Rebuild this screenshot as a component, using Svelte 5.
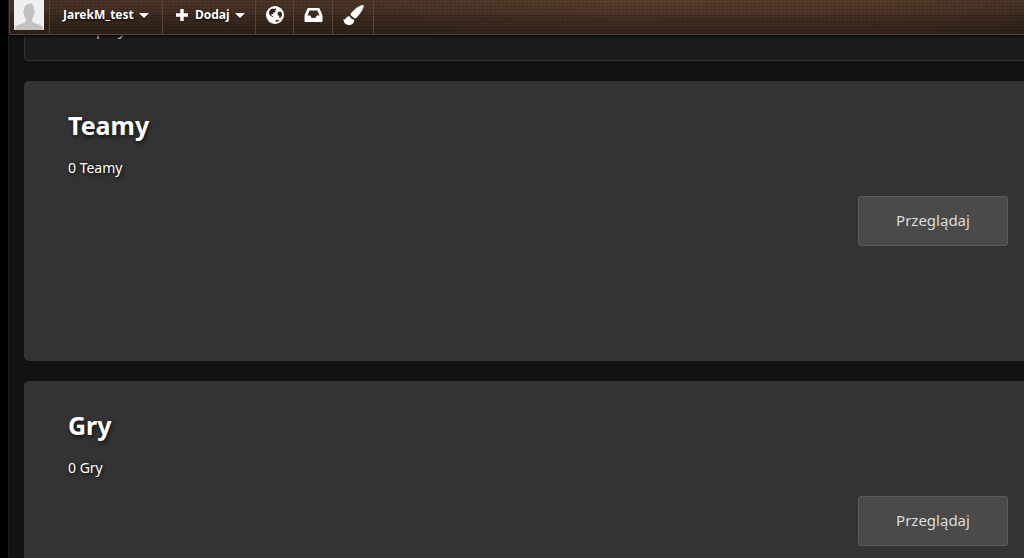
<script lang="ts">
  let userName = 'JarekM_test';

  let sections = [
    { title: 'Teamy', count: 0 },
    { title: 'Gry', count: 0 }
  ];
</script>

<div class="page">
  <header class="toolbar">
    <nav class="tools" aria-label="Pasek narzędzi">
      <a class="avatar" href="#profil" aria-label="Profil">
        <svg viewBox="0 0 30 30" aria-hidden="true">
          <rect width="30" height="30" fill="#efefef" />
          <path
            fill="#c2c2c2"
            d="M1 30c0-4 2-5 6-6 4-1 5-2 5-5-1-1-2-3-2-5-1-1-1-2 0-4 0-4 2-6 5-6 1 0 1-1 2-1 2 1 3 3 3 7 1 2 1 3 0 4 0 2-1 4-2 5 0 3 1 4 5 5 4 1 6 2 6 6z"
          />
        </svg>
      </a>
      <button type="button" class="tool user">
        <span>{userName}</span>
        <span class="caret"></span>
      </button>
      <button type="button" class="tool add">
        <svg class="plus" viewBox="0 0 12 12" aria-hidden="true">
          <path fill="#fff" d="M4.3 0h3.4v4.3H12v3.4H7.7V12H4.3V7.7H0V4.3h4.3z" />
        </svg>
        <span>Dodaj</span>
        <span class="caret"></span>
      </button>
      <button type="button" class="tool icon" aria-label="Język">
        <svg viewBox="0 0 18 18" aria-hidden="true">
          <circle cx="9" cy="9" r="9" fill="#fff" />
          <path
            fill="#35251b"
            d="M3.5 4.5L6 2.5l2 .5 1.500-.8 1 1.300-1.500 1 .8 1.200-1.800.8L6.700 8l-1.500.2.3 1.300 1.700.8-.5.6-2.400-1.200L3 7.500z"
          />
          <path fill="#35251b" d="M11.5 7.500l1-1.700 2-.3 1.300 1.500.2 2.500-1.700 2.500-1-.3-.2-1.900-1.400-.6z" />
          <path fill="#35251b" d="M9.5 14.500l2-.8 2 .3-1.300 1.300-2.500.7z" />
        </svg>
      </button>
      <button type="button" class="tool icon" aria-label="Wiadomości">
        <svg class="inbox" viewBox="0 0 18 18" aria-hidden="true">
          <path
            fill="#fff"
            fill-rule="evenodd"
            d="M4.2 2h9.600c.8 0 1.200.3 1.500 1L18 9.500V15c0 .7-.4 1-1 1H1c-.6 0-1-.3-1-1V9.500L2.700 3c.3-.7.7-1 1.500-1zm.8 2.600L3 9.500h2.800l1.300 2.600h3.800l1.300-2.600H15l-2-4.900z"
          />
        </svg>
      </button>
      <button type="button" class="tool icon" aria-label="Wygląd">
        <svg class="brush" viewBox="0 0 20 20" aria-hidden="true">
          <path
            fill="#fff"
            d="M19 0c1.500.2 1.500 1.600.8 3-1.500 3-4.200 7.500-7 9.800-1 .8-1.600.8-2.500 0L7.500 10.500c-.7-.8-.7-1.400 0-2.300C10 5 14.500 1.500 17.300.4 18 .1 18.500 0 19 0z"
          />
          <path
            fill="#fff"
            d="M6.200 11.200c.8 2 2 3 4.500 3.500.2 3.600-2.400 5.300-5.200 5.300C2 20 0 17.700 0 13.800c1 .8 1.700.9 2.200-.2.8-1.800 2.200-2.700 4-2.400z"
          />
        </svg>
      </button>
    </nav>
  </header>

  <main class="content">
    <section class="group">
      <p>0 Wpisy</p>
    </section>
    {#each sections as section (section.title)}
      <section class="card">
        <h2>{section.title}</h2>
        <p>{section.count} {section.title}</p>
        <button type="button" class="browse">Przeglądaj</button>
      </section>
    {/each}
  </main>
</div>

<style>
  :global(body) {
    background: #000;
  }

  .page {
    box-sizing: border-box;
    height: 100vh;
    margin-left: 8px;
    overflow: hidden;
    border-left: 1px solid #1c1c1c;
    background: #121212;
    color: #fff;
    font-family: 'Noto Sans', sans-serif;
  }

  .toolbar {
    position: relative;
    z-index: 1;
    box-sizing: border-box;
    height: 35px;
    border-bottom: 1px solid #5b473b;
    border-left: 1px solid #5b473b;
    border-bottom-left-radius: 3px;
    background:
      repeating-linear-gradient(0deg, rgba(0, 0, 0, 0.14) 0 1px, transparent 1px 3px),
      repeating-linear-gradient(90deg, rgba(0, 0, 0, 0.06) 0 2px, transparent 2px 4px),
      linear-gradient(rgba(0, 0, 0, 0) 0, rgba(0, 0, 0, 0.14) 14px, rgba(0, 0, 0, 0.22) 15px, rgba(0, 0, 0, 0.4) 34px),
      linear-gradient(90deg, #4c3628, #4f382a 35%, #5c402f 60%, #5a3e2d 85%, #4c3729);
    box-shadow: 0 1px 3px #000;
  }

  .tools {
    display: flex;
    height: 34px;
  }

  .avatar {
    box-sizing: border-box;
    width: 40px;
    padding-left: 4px;
    border-right: 1px solid #57443a;
  }

  .avatar svg {
    display: block;
    width: 30px;
    height: 30px;
  }

  .tool {
    display: flex;
    align-items: center;
    box-sizing: border-box;
    padding: 0 0 4px;
    border: 0;
    border-right: 1px solid #57443a;
    background: transparent;
    color: #fff;
    font: bold 12px/16px 'Noto Sans', sans-serif;
    text-shadow: 0 1px 2px #000;
    cursor: pointer;
  }

  .user,
  .add {
    gap: 5px;
    padding-left: 13px;
  }

  .user {
    width: 113px;
  }

  .add {
    width: 93px;
  }

  .plus {
    width: 12px;
    height: 12px;
    margin-right: 2px;
  }

  .caret {
    border: 5px solid transparent;
    border-top-color: #fff;
    border-bottom: 0;
  }

  .icon {
    padding-right: 9px;
    padding-left: 10px;
  }

  .icon svg {
    width: 18px;
    height: 18px;
  }

  .icon .inbox {
    width: 19px;
  }

  .icon .brush {
    width: 21px;
    height: 20px;
  }

  .content {
    padding-left: 15px;
  }

  .group {
    box-sizing: border-box;
    height: 61px;
    margin-top: -35px;
    padding: 16px 43px;
    border: 1px solid #333;
    border-right: 0;
    border-radius: 4px 0 0 4px;
    background: #1c1c1c;
    color: #bbb;
  }

  .group p {
    margin: 0;
    font-size: 16px;
    line-height: 24px;
  }

  h2 {
    margin: 0;
    font-size: 25px;
    line-height: 32px;
    text-shadow: 1px 2px 4px #111;
  }

  .card {
    display: flex;
    flex-direction: column;
    box-sizing: border-box;
    min-height: 280px;
    margin-top: 20px;
    padding: 28px 16px 28px 44px;
    border-radius: 5px 0 0 5px;
    background: #333;
  }

  .card p {
    margin: 17px 0 18px;
    font-size: 14px;
    line-height: 20px;
    text-shadow: 1px 1px 4px #000;
  }

  .browse {
    align-self: flex-end;
    width: 150px;
    height: 50px;
    padding: 0 0 2px;
    border: 1px solid #5c5c5c;
    border-radius: 3px;
    background: #4a4a4a;
    color: #ddd;
    font: 15px/24px 'Noto Sans', sans-serif;
    cursor: pointer;
  }
</style>
